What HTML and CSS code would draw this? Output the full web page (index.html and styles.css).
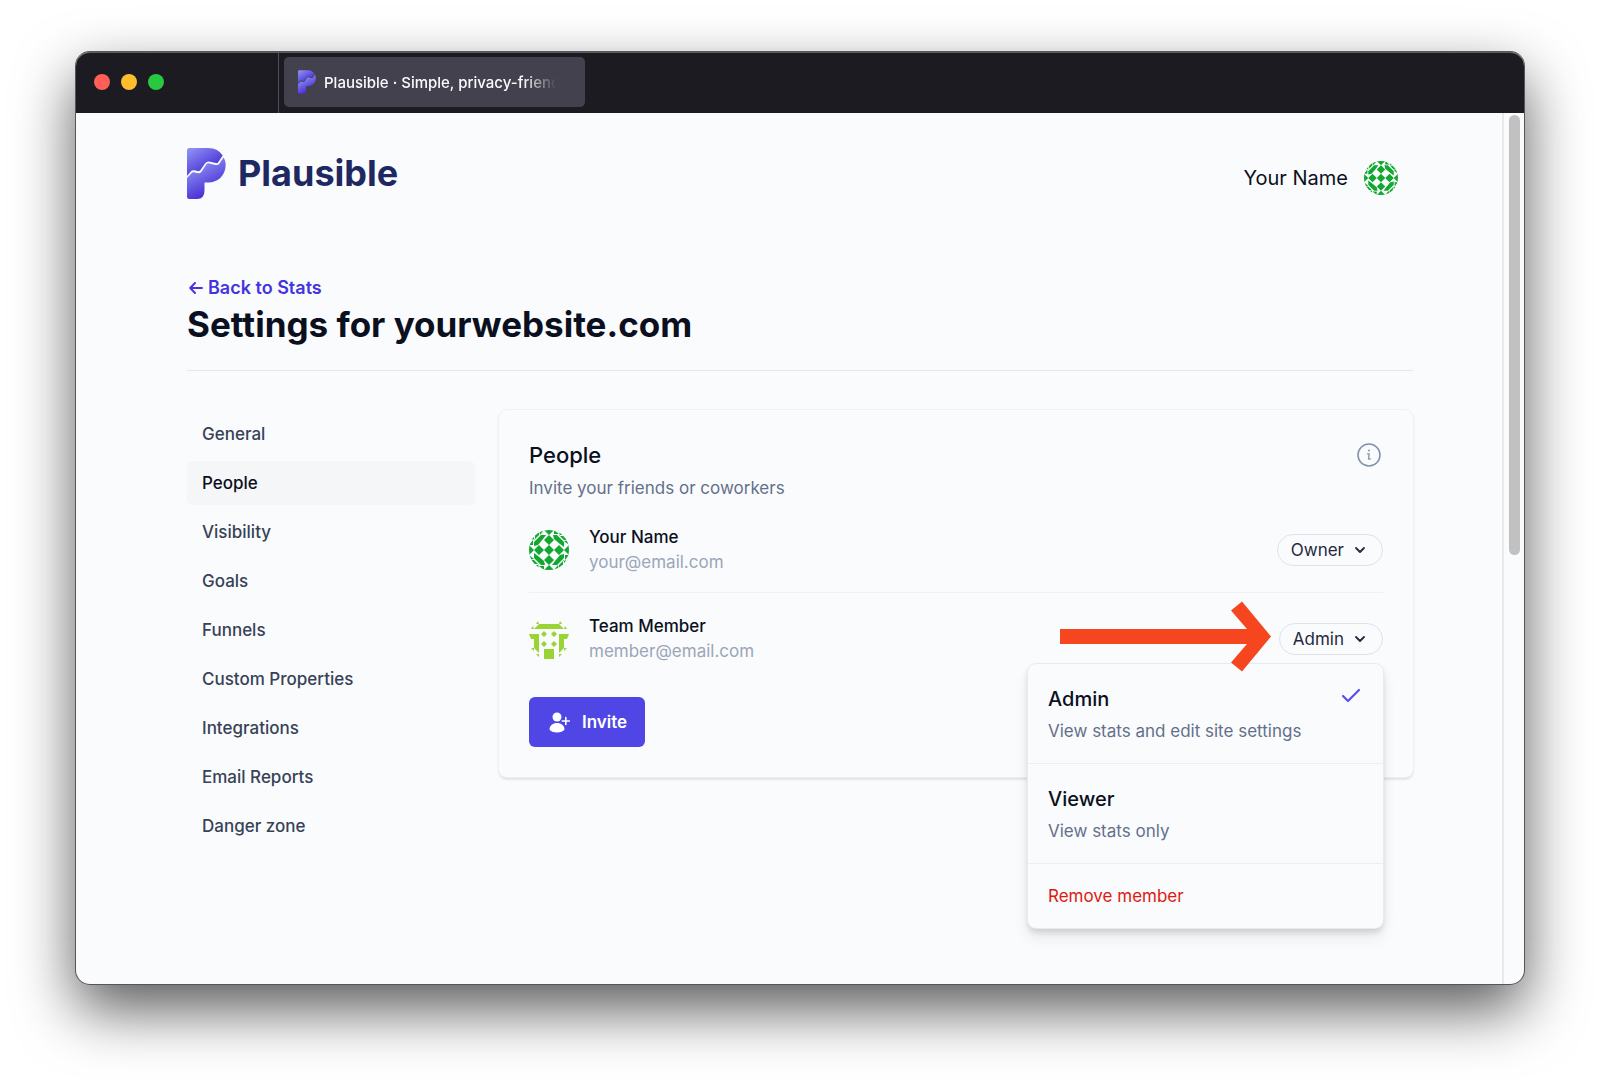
FILE: index.html
```html
<!DOCTYPE html>
<html lang="en">
<head>
    <meta charset="UTF-8">
    <meta name="viewport" content="width=device-width, initial-scale=1.0">
    <title>Plausible · Simple, privacy-friendly analytics</title>
    <link rel="stylesheet" href="styles.css">
</head>
<body>

<!-- shared shapes -->
<svg class="defs" width="0" height="0" aria-hidden="true">
    <defs>
        <linearGradient id="logoTop" gradientUnits="userSpaceOnUse" x1="6" y1="0" x2="21" y2="24">
            <stop offset="0" stop-color="#8b8df3"/>
            <stop offset="1" stop-color="#4a32d6"/>
        </linearGradient>
        <linearGradient id="logoBottom" gradientUnits="userSpaceOnUse" x1="8" y1="18" x2="22" y2="44">
            <stop offset="0" stop-color="#8a8ef3"/>
            <stop offset="1" stop-color="#4a32d6"/>
        </linearGradient>
        <clipPath id="round"><circle cx="20" cy="20" r="20"/></clipPath>
        <symbol id="logo" viewBox="0 0 39 51">
            <path fill="url(#logoTop)" d="M0 2.500Q0 0 2.500 0H21C28 0 33 3 35.700 7.500L31 14.500Q30.300 15.500 29 15L23 13.700Q20 13 18 15.500L13.500 22Q12.500 23.500 10.500 23L7 22.300Q5 22 3.800 23.500L0 28Z"/>
            <path fill="url(#logoBottom)" d="M36.600 9.500C38.300 12.500 39 15.500 38.500 19C37.600 28 30.500 34.500 21.500 34.500H17.500V42.500Q17.500 51 10 51H2.500Q0 51 0 48.500V30L5 24.700Q5.800 24 7 24.300L11 25.200Q13.200 25.600 14.500 23.700L19.300 16.500Q20.500 15 22.500 15.400L28.500 16.900Q31 17.500 32.500 15.500Z"/>
        </symbol>
        <g id="quarter">
            <path d="M20 5l5 5-5 5-5-5zM15 0h10l-5 5zM24 5h4l7 7v5l-4-3-6-5zM25 0l5 4h-5zM30 1l5 5h-4zM30 5l5 5v-5zM35 5l5 5-5 0zM35 11l5-1v5z"/>
        </g>
        <symbol id="avatarOwner" viewBox="0 0 40 40">
            <g fill="#12a830" clip-path="url(#round)">
                <path d="M20 15l5 5-5 5-5-5z"/>
                <use href="#quarter"/>
                <use href="#quarter" transform="rotate(90 20 20)"/>
                <use href="#quarter" transform="rotate(180 20 20)"/>
                <use href="#quarter" transform="rotate(270 20 20)"/>
            </g>
        </symbol>
        <symbol id="avatarMember" viewBox="0 0 40 40">
            <g fill="#98d534">
                <path d="M10 5h20l5 5H5zM9 2l1 3H7zM31 2l-1 3h3zM4 7l1 3H2zM36 7l-1 3h3z"/>
                <path d="M0 15h10v19l-5-5v-9H2zM40 15H30v19l5-5v-9h3zM2 29h3v3zM38 29h-3v3zM7 35h3v3zM33 35h-3v3z"/>
                <path d="M15 12l3 3-3 3-3-3zM25 12l3 3-3 3-3-3zM15 22l3 3-3 3-3-3zM25 22l3 3-3 3-3-3z"/>
                <path d="M15 30h10v10H15z"/>
            </g>
        </symbol>
        <symbol id="chevron" viewBox="0 0 10 10">
            <path d="M1 3l4 4 4-4" fill="none" stroke="currentColor" stroke-width="1.800" stroke-linecap="round" stroke-linejoin="round"/>
        </symbol>
    </defs>
</svg>

<div class="window">
    <div class="titlebar">
        <div class="lights">
            <span class="light red"></span>
            <span class="light yellow"></span>
            <span class="light green"></span>
        </div>
        <div class="tab">
            <svg class="favicon"><use href="#logo"/></svg>
            <span class="tab-title">Plausible · Simple, privacy-friend</span>
        </div>
    </div>

    <div class="viewport">
        <div class="page">
            <header class="header">
                <a class="brand" href="#">
                    <svg class="brand-mark"><use href="#logo"/></svg>
                    <span>Plausible</span>
                </a>
                <button class="account" type="button">
                    <span>Your Name</span>
                    <svg class="account-avatar"><use href="#avatarOwner"/></svg>
                </button>
            </header>

            <div class="heading">
                <a class="back" href="#">
                    <svg width="14" height="12" viewBox="0 0 14 12" aria-hidden="true"><path d="M13 6H1.500M6 1L1.200 6 6 11" fill="none" stroke="currentColor" stroke-width="1.900" stroke-linecap="round" stroke-linejoin="round"/></svg>
                    Back to Stats
                </a>
                <h1>Settings for yourwebsite.com</h1>
            </div>

            <div class="columns">
                <nav class="sidebar">
                    <a href="#">General</a>
                    <a href="#" class="active">People</a>
                    <a href="#">Visibility</a>
                    <a href="#">Goals</a>
                    <a href="#">Funnels</a>
                    <a href="#">Custom Properties</a>
                    <a href="#">Integrations</a>
                    <a href="#">Email Reports</a>
                    <a href="#">Danger zone</a>
                </nav>

                <section class="card">
                    <div class="card-head">
                        <div>
                            <h2>People</h2>
                            <p>Invite your friends or coworkers</p>
                        </div>
                        <a class="info" href="#" aria-label="Learn more">
                            <svg width="24" height="24" viewBox="0 0 24 24"><g fill="none" stroke="currentColor" stroke-width="1.600"><circle cx="12" cy="12" r="11"/><path d="M10.500 10.800h1.700l-.7 4.600q-.2 1.100 1.800.5" stroke-width="1.300" stroke-linecap="round" stroke-linejoin="round"/></g><circle cx="12" cy="7.600" r="1" fill="currentColor"/></svg>
                        </a>
                    </div>

                    <ul class="members">
                        <li class="member">
                            <svg class="avatar"><use href="#avatarOwner"/></svg>
                            <div class="who">
                                <strong>Your Name</strong>
                                <span>your@email.com</span>
                            </div>
                            <div class="role">
                                <button class="pill" type="button">Owner <svg class="chevron"><use href="#chevron"/></svg></button>
                            </div>
                        </li>
                        <li class="member">
                            <svg class="avatar"><use href="#avatarMember"/></svg>
                            <div class="who">
                                <strong>Team Member</strong>
                                <span>member@email.com</span>
                            </div>
                            <div class="role">
                                <button class="pill" type="button" aria-haspopup="true" aria-expanded="true">Admin <svg class="chevron"><use href="#chevron"/></svg></button>
                                <div class="menu">
                                    <button class="option" type="button">
                                        <span class="option-title">Admin
                                            <svg class="check" width="20" height="16" viewBox="0 0 20 16" aria-hidden="true"><path d="M2 8l5 5L18 2" fill="none" stroke="#5850ec" stroke-width="2.200" stroke-linecap="round" stroke-linejoin="round"/></svg>
                                        </span>
                                        <span class="option-text">View stats and edit site settings</span>
                                    </button>
                                    <button class="option" type="button">
                                        <span class="option-title">Viewer</span>
                                        <span class="option-text">View stats only</span>
                                    </button>
                                    <button class="option remove" type="button">Remove member</button>
                                </div>
                                <svg class="pointer" width="212" height="72" viewBox="0 0 212 72" aria-hidden="true"><path d="M0 28H187L171 9.500 182 .5 211 35.500 182 70.500 171 61.500 187 43H0Z" fill="#f54620"/></svg>
                            </div>
                        </li>
                    </ul>

                    <button class="invite" type="button">
                        <svg width="21" height="21" viewBox="0 0 21 21" aria-hidden="true"><circle cx="8" cy="5" r="4.500" fill="#fff"/><path d="M.5 17.500C.5 13.500 4 11 8 11s7.500 2.500 7.500 6.500C13.500 21.500 2.500 21.500.5 17.500Z" fill="#fff"/><path d="M16.800 5.500v7M13.300 9h7" stroke="#fff" stroke-width="1.600" stroke-linecap="round"/></svg>
                        Invite
                    </button>
                </section>
            </div>
        </div>
        <div class="scrollbar"><div class="thumb"></div></div>
    </div>
</div>

</body>
</html>
```

FILE: styles.css
```css
* {
    box-sizing: border-box;
}

body {
    margin: 0;
    padding: 52px 76px 101px;
    background: #fff;
    color: #0b1020;
    font-family: Inter, "Liberation Sans", sans-serif;
    font-size: 17px;
    line-height: 24px;
}

h1, h2, p, ul {
    margin: 0;
    padding: 0;
}

a {
    color: inherit;
    text-decoration: none;
}

button {
    border: 0;
    background: none;
    color: inherit;
    font: inherit;
    cursor: pointer;
}

.defs {
    position: absolute;
}

/* browser window */
.window {
    display: flex;
    flex-direction: column;
    min-height: calc(100vh - 153px);
    border-radius: 14px;
    background: #fafbfd;
    box-shadow: 0 0 0 1px #55555a, 0 25px 60px rgba(0, 0, 0, 0.66);
}

.titlebar {
    display: flex;
    height: 61px;
    border-top: 1px solid #5c5b63;
    border-radius: 14px 14px 0 0;
    background: #1c1b22;
}

.lights {
    display: flex;
    align-items: center;
    gap: 11px;
    width: 203px;
    padding: 0 0 2px 18px;
    border-right: 1px solid #4f4e59;
}

.light {
    width: 16px;
    height: 16px;
    border-radius: 50%;
}

.red {
    background: #ff5f57;
}

.yellow {
    background: #febc2e;
}

.green {
    background: #28c840;
}

.tab {
    display: flex;
    align-items: center;
    gap: 8px;
    width: 301px;
    margin: 4px 5px 6px;
    padding: 0 24px 0 14px;
    border-radius: 5px;
    background: #42414d;
    color: #fbfbfe;
}

.favicon {
    flex: none;
    width: 18px;
    height: 24px;
}

.tab-title {
    flex: 1;
    padding-top: 2px;
    overflow: hidden;
    white-space: nowrap;
    font-size: 15px;
    font-weight: 500;
    mask-image: linear-gradient(90deg, #000 84%, transparent 98%);
}

.viewport {
    display: flex;
    flex: 1;
}

.page {
    flex: 1;
    padding: 33px 89px 104px 111px;
}

.scrollbar {
    width: 22px;
    padding: 2px 5px;
    border-left: 2px solid #e8e9eb;
    border-radius: 0 0 14px 0;
}

.thumb {
    width: 11px;
    height: 440px;
    border-radius: 6px;
    background: #c1c1c1;
}

/* header */
.header {
    display: flex;
    justify-content: space-between;
    align-items: center;
}

.brand {
    display: flex;
    align-items: center;
    gap: 12px;
    color: #1f2961;
    font-size: 36px;
    font-weight: 700;
    line-height: 54px;
}

.brand-mark {
    width: 39px;
    height: 51px;
}

.account {
    display: flex;
    align-items: center;
    gap: 16px;
    margin-top: 9px;
    padding: 0 15px;
    font-size: 20px;
}

.account-avatar {
    width: 34px;
    height: 34px;
}

.heading {
    margin-top: 76px;
    padding-bottom: 22px;
    border-bottom: 1px solid #e5e7ee;
}

.back {
    display: inline-flex;
    align-items: center;
    gap: 5px;
    padding-left: 2px;
    color: #4434e0;
    font-size: 18px;
    font-weight: 600;
}

h1 {
    font-size: 35px;
    font-weight: 700;
    line-height: 48px;
    white-space: nowrap;
}

/* settings */
.columns {
    display: grid;
    grid-template-columns: 288px 1fr;
    align-items: start;
    gap: 24px;
    padding-top: 39px;
}

.sidebar {
    display: flex;
    flex-direction: column;
    gap: 5px;
    padding-top: 2px;
    color: #374256;
    font-weight: 500;
}

.sidebar a {
    padding: 10px 15px;
    border-radius: 6px;
}

.sidebar .active {
    background: #f5f6f8;
    color: #0b1020;
}

.card {
    padding: 30px;
    border-radius: 8px;
    background: #fafbfd;
    box-shadow: 0 0 0 1px #f0f1f4, 0 2px 3px rgba(0, 0, 0, 0.16);
}

.card-head {
    display: flex;
    justify-content: space-between;
}

h2 {
    font-size: 22px;
    font-weight: 500;
    line-height: 30px;
}

.card-head p {
    margin-top: 6px;
    color: #64708a;
}

.info {
    margin: 3px 2px 0;
    color: #8592ab;
}

.members {
    margin-top: 4px;
    list-style: none;
}

.member {
    display: flex;
    align-items: center;
    gap: 20px;
    padding: 21px 0 17px;
}

.member + .member {
    border-top: 1px solid #f0f1f5;
}

.avatar {
    width: 40px;
    height: 40px;
}

.who {
    flex: 1;
}

.who strong, .who span {
    display: block;
    line-height: 25px;
}

.who strong {
    font-weight: 500;
}

.who span {
    color: #9ba6b9;
}

.role {
    position: relative;
}

.pill {
    display: flex;
    align-items: center;
    gap: 11px;
    padding: 3px 17px 3px 13px;
    border: 1px solid #dfe2e8;
    border-radius: 16px;
    color: #1f2a40;
}

.chevron {
    width: 10px;
    height: 10px;
}

.menu {
    position: absolute;
    top: 100%;
    right: 0;
    z-index: 1;
    width: 355px;
    margin-top: 9px;
    border-radius: 8px;
    background: #fafbfd;
    box-shadow: 0 0 0 1px #e9eaee, 0 4px 6px rgba(0, 0, 0, 0.14), 0 10px 16px rgba(0, 0, 0, 0.07);
}

.option {
    display: block;
    width: 100%;
    padding: 21px 20px 20px;
    text-align: left;
}

.option + .option {
    border-top: 1px solid #eceef2;
}

.option-title {
    display: flex;
    justify-content: space-between;
    padding-right: 2px;
    font-size: 20px;
    font-weight: 500;
    line-height: 28px;
}

.check {
    margin-top: 3px;
}

.option-text {
    display: block;
    margin-top: 6px;
    color: #64708a;
}

.remove {
    padding-top: 20px;
    color: #dc1a10;
}

.pointer {
    position: absolute;
    top: -22px;
    right: 111px;
    z-index: 2;
}

.invite {
    display: flex;
    align-items: center;
    gap: 12px;
    margin-top: 16px;
    padding: 13px 18px 13px 20px;
    border-radius: 6px;
    background: #4f46e5;
    color: #fff;
    font-weight: 600;
}
```
